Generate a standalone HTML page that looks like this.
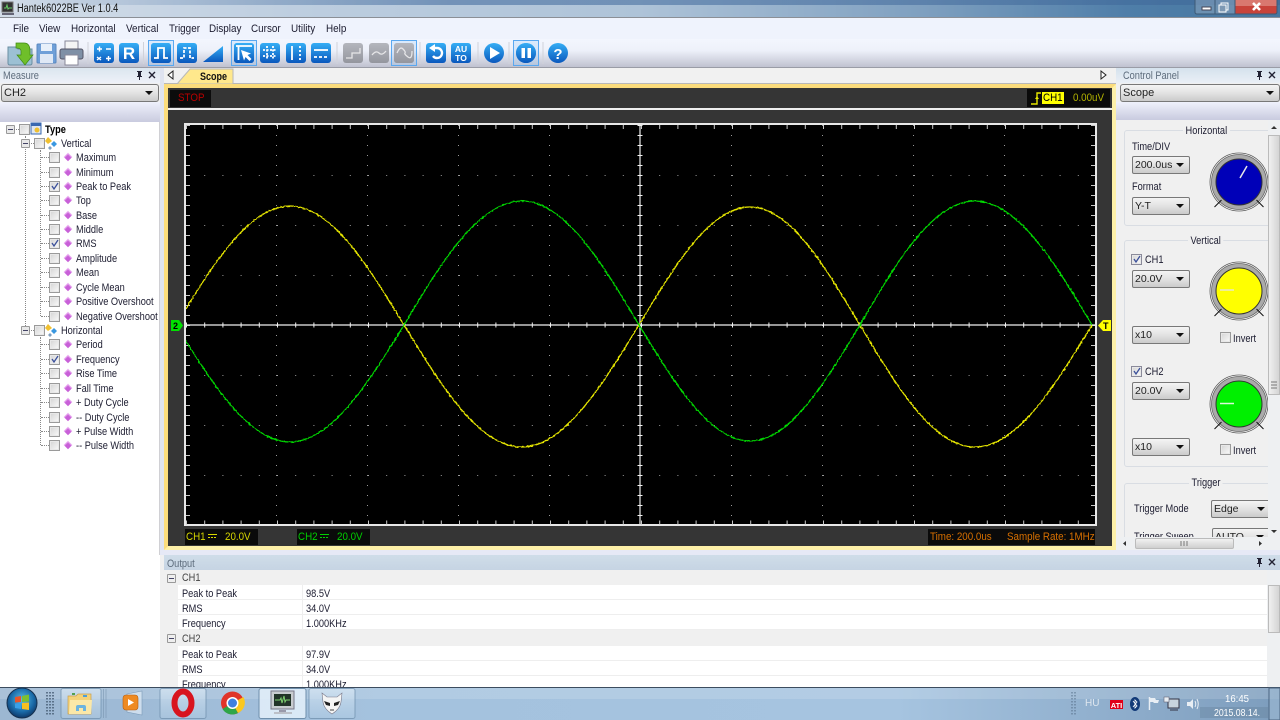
<!DOCTYPE html>
<html><head><meta charset="utf-8"><title>Hantek6022BE</title>
<style>
html,body{margin:0;padding:0;width:1280px;height:720px;overflow:hidden;background:#f0f0f0}
body{filter:blur(.35px)}
.a{position:absolute}
.t{position:absolute;white-space:nowrap;transform:scaleX(.84);transform-origin:0 50%;font:11px/12px "Liberation Sans",sans-serif;color:#1c1c30;margin-top:1px}
.m{transform:scaleX(.9)}
.g{color:#5d6c7c;font-size:11px;transform:scaleX(.84)}
.s{position:absolute;white-space:nowrap;transform:scaleX(.89);transform-origin:0 50%;font:11px/12px "Liberation Sans",sans-serif}
.cb{position:absolute;width:9px;height:9px;border:1px solid #9a9a9a;background:linear-gradient(135deg,#d4d4d4,#fafafa);box-shadow:inset 0 0 0 1px #e8e8e8}
.cb svg{position:absolute;left:0;top:0}
.d{position:absolute;width:6px;height:6px;background:#c860d8;transform:rotate(45deg);left:65px;box-shadow:inset 1px 1px 1px #eeb8f4}
.h{position:absolute;border-top:1px dotted #888;height:0}
.v{position:absolute;border-left:1px dotted #888;width:0}
.x{position:absolute;width:7px;height:7px;border:1px solid #999;background:#e8e8e8;border-radius:1px}
.x:after{content:"";position:absolute;left:1px;top:3px;width:5px;height:1px;background:#446}
.c{position:absolute;box-sizing:border-box;border:1px solid #787878;border-radius:2px;background:linear-gradient(#f4f4f4,#e2e2e2 50%,#cbcbcb);font:10.5px/16px "Liberation Sans",sans-serif;color:#222;padding-left:2px;overflow:hidden}
.c:after{content:"";position:absolute;right:5px;top:6px;border:4px solid transparent;border-top:4px solid #111;border-bottom:0}
.box{position:absolute;border:1px solid #d9dde3;border-radius:3px}
.lbl{position:absolute;background:#f0f0f0;padding:0 3px}
.row{position:absolute;left:178px;width:1089px;height:14px;background:#fff;border-bottom:1px solid #eee}
.row i{position:absolute;left:124px;top:0;width:1px;height:15px;background:#eee}
</style></head><body>

<!-- title bar -->
<div class="a" style="left:0;top:0;width:1280px;height:17px;background:linear-gradient(90deg,#d3dde9 0,#bccddf 25%,#aec3d8 50%,#7fa0c0 72%,#4f7ea9 88%,#47779f 100%)"></div>
<div class="a" style="left:0;top:0;width:1280px;height:5px;background:linear-gradient(90deg,rgba(80,120,170,0),rgba(70,110,160,.6) 35%,rgba(60,100,150,.5) 100%)"></div>
<div class="a" style="left:0;top:17px;width:1280px;height:1px;background:#8b8f96"></div>
<svg class="a" style="left:0;top:0" width="16" height="17"><rect x="2" y="2" width="11" height="10" fill="#333" stroke="#777"/><path d="M4 8h2l1-3 1 4 1-1h3" stroke="#6c6" fill="none"/><rect x="2" y="13" width="12" height="2" fill="#667"/></svg>
<div class="t" style="left:17px;top:2px;font-size:11.5px;color:#111;transform:scaleX(.8)">Hantek6022BE Ver 1.0.4</div>
<svg class="a" style="left:1194px;top:0" width="86" height="16">
<rect x="41" y="0" width="42" height="14" rx="2" fill="#c8433a"/><rect x="41" y="0" width="42" height="6" fill="#d9786f"/>
<rect x="1" y="0" width="40" height="14" fill="#8aa4bd" fill-opacity=".55"/>
<path d="M1 0v12q0 2 2 2h78q2 0 2-2V0M21 0v14M41 0v14" stroke="#3d5a76" fill="none"/>
<rect x="8" y="7" width="9" height="3" fill="#fff" stroke="#445"/>
<rect x="27" y="3" width="7" height="7" fill="none" stroke="#fff"/><rect x="25" y="5" width="7" height="7" fill="#7d98b3" stroke="#fff"/>
<path d="M59 3l7 7M66 3l-7 7" stroke="#fff" stroke-width="2.6"/>
</svg>

<!-- menu & toolbar -->
<div class="a" style="left:0;top:18px;width:1280px;height:21px;background:#eff3fd"></div>
<div class="a" style="left:0;top:39px;width:1280px;height:28px;background:linear-gradient(#f3f6fe 0,#eef1fa 40%,#c0c2d0 100%)"></div>
<div class="a" style="left:0;top:67px;width:1280px;height:1px;background:#9a9ca6"></div>
<div class="t m" style="left:13px;top:22px">File</div>
<div class="t m" style="left:39px;top:22px">View</div>
<div class="t m" style="left:71px;top:22px">Horizontal</div>
<div class="t m" style="left:126px;top:22px">Vertical</div>
<div class="t m" style="left:169px;top:22px">Trigger</div>
<div class="t m" style="left:209px;top:22px">Display</div>
<div class="t m" style="left:251px;top:22px">Cursor</div>
<div class="t m" style="left:291px;top:22px">Utility</div>
<div class="t m" style="left:326px;top:22px">Help</div>

<svg class="a" style="left:0;top:39px" width="600" height="28">
<defs>
<linearGradient id="b" x1="0" y1="0" x2="0" y2="1"><stop offset="0" stop-color="#35aef5"/><stop offset="1" stop-color="#0a58bd"/></linearGradient>
<linearGradient id="gr" x1="0" y1="0" x2="0" y2="1"><stop offset="0" stop-color="#b4b6bd"/><stop offset="1" stop-color="#94969e"/></linearGradient>
</defs>
<!-- open / save / print -->
<path d="M8 8h8l2 2h14v14q0 2-2 2H10q-2 0-2-2z" fill="#9cc0d4" stroke="#6a8ea2"/>
<path d="M16 4h8q6 0 6 8v4h3l-8 10-8-10h4v-4q0-3-5-3z" fill="#6fbf2a" stroke="#3f8a14" stroke-width=".7"/>
<rect x="37" y="5" width="19" height="19" rx="1" fill="#6f9fd8" stroke="#5a88c0"/><rect x="41" y="5" width="11" height="7" fill="#e8f0fa"/><rect x="40" y="15" width="13" height="9" fill="#dfe8f5"/>
<rect x="65" y="2" width="13" height="9" fill="#f5f5f5" stroke="#889"/><rect x="60" y="10" width="23" height="10" rx="2" fill="#7f90a6" stroke="#556"/><rect x="65" y="16" width="13" height="10" fill="#fff" stroke="#889"/>
<path d="M88 3v22M143.500 3v22M231 3v22M337 3v22M420 3v22M478 3v22M509 3v22M543 3v22" stroke="#d0d2da"/>
<!-- blue square buttons -->
<g fill="url(#b)">
<rect x="94" y="4" width="20" height="20" rx="3"/><rect x="119" y="4" width="20" height="20" rx="3"/>
<rect x="151" y="4" width="20" height="20" rx="3"/><rect x="177" y="4" width="20" height="20" rx="3"/>
<rect x="234" y="4" width="20" height="20" rx="3"/><rect x="260" y="4" width="20" height="20" rx="3"/><rect x="286" y="4" width="20" height="20" rx="3"/><rect x="311" y="4" width="20" height="20" rx="3"/>
<rect x="426" y="4" width="20" height="20" rx="3"/><rect x="451" y="4" width="20" height="20" rx="3"/>
<path d="M203 23l20-16v16z"/>
<circle cx="494" cy="14" r="10"/><circle cx="526" cy="14" r="10"/><circle cx="558" cy="14" r="10"/>
</g>
<g fill="url(#gr)"><rect x="343" y="4" width="20" height="20" rx="3"/><rect x="369" y="4" width="20" height="20" rx="3"/><rect x="394" y="4" width="20" height="20" rx="3"/></g>
<!-- highlight frames -->
<g fill="#7cc0f8" fill-opacity=".2" stroke="#5aa8f0"><rect x="148.500" y="1.500" width="25" height="25"/><rect x="231.500" y="1.500" width="25" height="25"/><rect x="391.500" y="1.500" width="25" height="25"/><rect x="513.500" y="1.500" width="25" height="25"/></g>
<g fill="url(#b)"><rect x="151" y="4" width="20" height="20" rx="3"/><rect x="234" y="4" width="20" height="20" rx="3"/><circle cx="526" cy="14" r="10"/></g>
<rect x="394" y="4" width="20" height="20" rx="3" fill="url(#gr)"/>
<!-- glyphs -->
<g fill="none" stroke="#fff" stroke-width="1.800">
<path d="M97 10h5M99.500 7.500v5M106 10h5M97 18l4 3M101 18l-4 3M106 19.500h5M108.500 17v5" stroke-width="1.400"/>
<path d="M154 19h4v-10h6v10h4"/>
<path d="M180 19h4v-10h6v10h4" stroke-dasharray="3 1.500"/>
<path d="M236 7h16M238.500 7v14"/>
<path d="M263 11h14M263 17h14M267 7v14M273 7v14" stroke-dasharray="2 1.500"/>
<path d="M292 7v14" /><path d="M300 7v14" stroke-dasharray="2 2"/>
<path d="M314 11h14"/><path d="M314 18h14" stroke-dasharray="3 2"/>
<path d="M346 19h6v-5h8v-5" stroke-width="1.300" stroke="#e6e6e8"/>
<path d="M372 16q4-5 7-2t7-2" stroke-width="1.300" stroke="#e6e6e8"/>
<path d="M397 14q3-7 6-4t2 4 3 4 4-6" stroke-width="1.300" stroke="#e6e6e8"/>
<path d="M431 9h6a5 5 0 1 1-4 8" stroke-width="2.400"/>
</g>
<path d="M435 5v8l-6-4z" fill="#fff"/>
<path d="M241 11l10 3.500-3.500 1.500 4 4-2 2-4-4-1.500 3.500z" fill="#fff"/>
<path d="M490 8l10 6-10 6z" fill="#fff"/>
<rect x="521.500" y="9" width="3.500" height="10" fill="#fff"/><rect x="527.500" y="9" width="3.500" height="10" fill="#fff"/>
<g font-family="Liberation Sans,sans-serif" font-weight="bold" fill="#fff" text-anchor="middle">
<text x="129" y="20" font-size="17">R</text>
<text x="461" y="13" font-size="8.500">AU</text><text x="461" y="22" font-size="8.500">TO</text>
<text x="558" y="20" font-size="15">?</text>
</g>
</svg>

<!-- left panel -->
<div class="a" style="left:0;top:68px;width:160px;height:15px;background:linear-gradient(#dbe6ef,#eef1f8)"></div>
<div class="t g" style="left:3px;top:69px">Measure</div>
<svg class="a" style="left:134px;top:70px" width="24" height="11"><path d="M3 1h5v1h-1v4h1v1H6v3H5V7H3V6h1V2H3z" fill="#223"/><path d="M15 2l6 6M21 2l-6 6" stroke="#223" stroke-width="1.400"/></svg>
<div class="c" style="left:1px;top:84px;width:158px;height:18px;border-radius:3px;font-size:11px">CH2</div>
<div class="a" style="left:0;top:102px;width:160px;height:20px;background:linear-gradient(#eff1fc,#c9cbdf)"></div>
<div class="a" style="left:0;top:122px;width:160px;height:565px;background:#fff;border-right:0"></div>
<div class="a" style="left:159px;top:122px;width:1px;height:433px;background:#d0d0d4"></div>

<!-- tree -->
<div class="v" style="left:25px;top:136px;height:194px"></div>
<div class="v" style="left:40px;top:150px;height:166px"></div>
<div class="v" style="left:40px;top:337px;height:108px"></div>
<div class="x" style="left:6px;top:125px"></div>
<div class="h" style="left:14px;top:129px;width:5px"></div>
<div class="cb" style="left:19px;top:124px"></div>
<svg class="a" style="left:30px;top:122px" width="12" height="14"><rect x="1" y="1" width="10" height="11" fill="#dfe6f0" stroke="#3a68b0"/><rect x="1" y="1" width="10" height="3" fill="#3a68b0"/><circle cx="7" cy="8" r="2.500" fill="#f0c030"/></svg>
<div class="t" style="left:45px;top:123px;font-weight:bold;color:#000">Type</div>
<div class="x" style="left:21px;top:139px"></div>
<div class="h" style="left:29px;top:143px;width:5px"></div>
<div class="cb" style="left:34px;top:138px"></div>
<svg class="a" style="left:44px;top:136px" width="15" height="15"><path d="M4 1l4 4-4 3-3-3z" fill="#f0c030"/><path d="M10 5l3 3-3 3-3-3z" fill="#3a98e0"/><path d="M6 10l2 2-2 2-2-2z" fill="#80a0c0"/></svg>
<div class="t" style="left:61px;top:137px">Vertical</div>
<div class="x" style="left:21px;top:326px"></div>
<div class="h" style="left:29px;top:330px;width:5px"></div>
<div class="cb" style="left:34px;top:325px"></div>
<svg class="a" style="left:44px;top:323px" width="15" height="15"><path d="M4 1l4 4-4 3-3-3z" fill="#f0c030"/><path d="M10 5l3 3-3 3-3-3z" fill="#3a98e0"/><path d="M6 10l2 2-2 2-2-2z" fill="#80a0c0"/></svg>
<div class="t" style="left:61px;top:324px">Horizontal</div>

<div class="h" style="left:41px;top:157px;width:8px"></div><div class="cb" style="left:49px;top:152px"></div><div class="d" style="top:154px"></div><div class="t" style="left:76px;top:151px">Maximum</div>
<div class="h" style="left:41px;top:172px;width:8px"></div><div class="cb" style="left:49px;top:167px"></div><div class="d" style="top:169px"></div><div class="t" style="left:76px;top:166px">Minimum</div>
<div class="h" style="left:41px;top:186px;width:8px"></div><div class="cb" style="left:49px;top:181px"><svg width="9" height="9"><path d="M2 4l2 3 4-6" stroke="#3a4f9a" stroke-width="1.300" fill="none"/></svg></div><div class="d" style="top:183px"></div><div class="t" style="left:76px;top:180px">Peak to Peak</div>
<div class="h" style="left:41px;top:200px;width:8px"></div><div class="cb" style="left:49px;top:195px"></div><div class="d" style="top:197px"></div><div class="t" style="left:76px;top:194px">Top</div>
<div class="h" style="left:41px;top:215px;width:8px"></div><div class="cb" style="left:49px;top:210px"></div><div class="d" style="top:212px"></div><div class="t" style="left:76px;top:209px">Base</div>
<div class="h" style="left:41px;top:229px;width:8px"></div><div class="cb" style="left:49px;top:224px"></div><div class="d" style="top:226px"></div><div class="t" style="left:76px;top:223px">Middle</div>
<div class="h" style="left:41px;top:243px;width:8px"></div><div class="cb" style="left:49px;top:238px"><svg width="9" height="9"><path d="M2 4l2 3 4-6" stroke="#3a4f9a" stroke-width="1.300" fill="none"/></svg></div><div class="d" style="top:240px"></div><div class="t" style="left:76px;top:237px">RMS</div>
<div class="h" style="left:41px;top:258px;width:8px"></div><div class="cb" style="left:49px;top:253px"></div><div class="d" style="top:255px"></div><div class="t" style="left:76px;top:252px">Amplitude</div>
<div class="h" style="left:41px;top:272px;width:8px"></div><div class="cb" style="left:49px;top:267px"></div><div class="d" style="top:269px"></div><div class="t" style="left:76px;top:266px">Mean</div>
<div class="h" style="left:41px;top:287px;width:8px"></div><div class="cb" style="left:49px;top:282px"></div><div class="d" style="top:284px"></div><div class="t" style="left:76px;top:281px">Cycle Mean</div>
<div class="h" style="left:41px;top:301px;width:8px"></div><div class="cb" style="left:49px;top:296px"></div><div class="d" style="top:298px"></div><div class="t" style="left:76px;top:295px">Positive Overshoot</div>
<div class="h" style="left:41px;top:316px;width:8px"></div><div class="cb" style="left:49px;top:311px"></div><div class="d" style="top:313px"></div><div class="t" style="left:76px;top:310px">Negative Overshoot</div>
<div class="h" style="left:41px;top:344px;width:8px"></div><div class="cb" style="left:49px;top:339px"></div><div class="d" style="top:341px"></div><div class="t" style="left:76px;top:338px">Period</div>
<div class="h" style="left:41px;top:359px;width:8px"></div><div class="cb" style="left:49px;top:354px"><svg width="9" height="9"><path d="M2 4l2 3 4-6" stroke="#3a4f9a" stroke-width="1.300" fill="none"/></svg></div><div class="d" style="top:356px"></div><div class="t" style="left:76px;top:353px">Frequency</div>
<div class="h" style="left:41px;top:373px;width:8px"></div><div class="cb" style="left:49px;top:368px"></div><div class="d" style="top:370px"></div><div class="t" style="left:76px;top:367px">Rise Time</div>
<div class="h" style="left:41px;top:388px;width:8px"></div><div class="cb" style="left:49px;top:383px"></div><div class="d" style="top:385px"></div><div class="t" style="left:76px;top:382px">Fall Time</div>
<div class="h" style="left:41px;top:402px;width:8px"></div><div class="cb" style="left:49px;top:397px"></div><div class="d" style="top:399px"></div><div class="t" style="left:76px;top:396px">+ Duty Cycle</div>
<div class="h" style="left:41px;top:417px;width:8px"></div><div class="cb" style="left:49px;top:412px"></div><div class="d" style="top:414px"></div><div class="t" style="left:76px;top:411px">-- Duty Cycle</div>
<div class="h" style="left:41px;top:431px;width:8px"></div><div class="cb" style="left:49px;top:426px"></div><div class="d" style="top:428px"></div><div class="t" style="left:76px;top:425px">+ Pulse Width</div>
<div class="h" style="left:41px;top:445px;width:8px"></div><div class="cb" style="left:49px;top:440px"></div><div class="d" style="top:442px"></div><div class="t" style="left:76px;top:439px">-- Pulse Width</div>

<!-- centre: tabs -->
<div class="a" style="left:160px;top:68px;width:4px;height:487px;background:#dfe3f0"></div>
<div class="a" style="left:164px;top:68px;width:952px;height:15px;background:#f1f1f1;border-bottom:1px solid #b8b8b8"></div>
<svg class="a" style="left:164px;top:68px" width="952" height="16">
<path d="M13 16L26 1h43v15z" fill="#ffe88c" stroke="#b8b8b8"/>
<path d="M9 3v8l-5-4zM937 3v8l5-4z" fill="#fff" stroke="#222"/>
</svg>
<div class="t" style="left:200px;top:70px;font-weight:bold;color:#111;transform:scaleX(.82)">Scope</div>

<!-- scope frame -->
<div class="a" style="left:164px;top:84px;width:952px;height:466px;box-sizing:border-box;border:4px solid #fbdc7c;border-bottom-color:#fdf0a8;border-right-color:#fdf0a8;background:#353535;box-shadow:0 1px 0 #fff"></div>
<div class="a" style="left:168px;top:108px;width:944px;height:2px;background:#eee"></div>
<div class="a" style="left:170px;top:90px;width:41px;height:17px;background:#0c0c0c"></div>
<div class="s" style="left:178px;top:92px;color:#b80000">STOP</div>
<div class="a" style="left:1027px;top:89px;width:83px;height:18px;background:#0a0a0a"></div>
<svg class="a" style="left:1030px;top:90px" width="12" height="16"><path d="M1 14h6V3h4" stroke="#e6e600" stroke-width="1.400" fill="none"/><path d="M5 9l2-3 2 3z" fill="#e6e600"/></svg>
<div class="a" style="left:1042px;top:92px;width:22px;height:12px;background:#ffff00"></div>
<div class="s" style="left:1043px;top:92px;color:#000">CH1</div>
<div class="s" style="left:1073px;top:92px;color:#b4b400">0.00uV</div>

<!-- plot -->
<svg class="a" style="left:184px;top:123px" width="914" height="404" viewBox="184 123 914 404">
<defs>
<clipPath id="cp"><rect x="186" y="125" width="909" height="399"/></clipPath>
<filter id="j" x="-2%" y="-2%" width="104%" height="104%"><feTurbulence type="fractalNoise" baseFrequency=".45" numOctaves="1" seed="4"/><feDisplacementMap in="SourceGraphic" scale="2.400" xChannelSelector="R" yChannelSelector="G"/></filter>
</defs>
<rect x="185" y="124" width="911" height="401" fill="#000" stroke="#e8e8e8" stroke-width="2"/>
<g stroke="#9a9a9a" stroke-width="1">
<path d="M276.500 125V524M367.500 125V524M458.500 125V524M549.500 125V524M731.500 125V524M822.500 125V524M913.500 125V524M1004.500 125V524" stroke-dasharray="1 9"/>
<path d="M186 175.500H1095M186 225.500H1095M186 275.500H1095M186 375.500H1095M186 425.500H1095M186 475.500H1095" stroke-dasharray="1 17.200"/>
</g>
<g stroke="#c8c8c8">
<path d="M186 127H1095M186 522.500H1095" stroke-width="4" stroke-dasharray="1 17.200"/>
<path d="M188 125V524M1093 125V524" stroke-width="4" stroke-dasharray="1 9"/>
</g>
<g stroke="#f0f0f0">
<path d="M186 325H1095" stroke-width="1.200"/>
<path d="M640 125V524" stroke-width="1.200"/>
<path d="M186 325H1095" stroke-width="5" stroke-dasharray="1 17.200"/>
<path d="M640 125V524" stroke-width="5" stroke-dasharray="1 9"/>
</g>
<g clip-path="url(#cp)" fill="none" stroke-width="1.300" filter="url(#j)">
<path stroke="#e8e800" d="M176,325C213,264 249,206 290,206C331,206 367,264 404,325C442,387 479,447 522,447C564,447 601,387 639,325C675,265 710,207 750,207C790,207 824,265 860,325C897,387 933,447 975,447C1017,447 1054,387 1092,325"/>
<path stroke="#00d800" d="M176,325C213,385 249,442 290,442C331,442 367,385 404,325C442,261 479,201 522,201C564,201 601,261 639,325C675,384 710,441 750,441C790,441 824,384 860,325C897,261 933,201 975,201C1017,201 1054,261 1092,325"/>
</g>
</svg>
<svg class="a" style="left:170px;top:319px" width="14" height="13"><path d="M1 1h8l4 5.500-4 5.500H1z" fill="#00e000"/><text x="3" y="10" font-size="9" font-weight="bold" font-family="Liberation Sans,sans-serif" fill="#000">2</text></svg>
<svg class="a" style="left:1097px;top:319px" width="15" height="13"><path d="M14 1H6L1 6.500 6 12h8z" fill="#ffff00"/><text x="6" y="10" font-size="9" font-weight="bold" font-family="Liberation Sans,sans-serif" fill="#000">T</text></svg>

<!-- scope bottom -->
<div class="a" style="left:185px;top:529px;width:73px;height:16px;background:#0a0a0a"></div>
<div class="a" style="left:297px;top:529px;width:73px;height:16px;background:#0a0a0a"></div>
<div class="a" style="left:928px;top:529px;width:167px;height:16px;background:#0a0a0a"></div>
<div class="s" style="left:186px;top:531px;color:#d8d800">CH1</div>
<svg class="a" style="left:208px;top:533px" width="10" height="6"><path d="M0 1.500h9" stroke="#d8d800"/><path d="M0 4.500h9" stroke="#d8d800" stroke-dasharray="2 1"/></svg>
<div class="s" style="left:225px;top:531px;color:#d8d800">20.0V</div>
<div class="s" style="left:298px;top:531px;color:#00d000">CH2</div>
<svg class="a" style="left:320px;top:533px" width="10" height="6"><path d="M0 1.500h9" stroke="#00d000"/><path d="M0 4.500h9" stroke="#00d000" stroke-dasharray="2 1"/></svg>
<div class="s" style="left:337px;top:531px;color:#00d000">20.0V</div>
<div class="s" style="left:930px;top:531px;color:#d87000">Time: 200.0us</div>
<div class="s" style="left:1007px;top:531px;color:#d87000">Sample Rate: 1MHz</div>

<!-- right panel -->
<div class="a" style="left:1116px;top:68px;width:164px;height:15px;background:linear-gradient(#d5e2ed,#eaeff6)"></div>
<div class="t g" style="left:1123px;top:69px">Control Panel</div>
<svg class="a" style="left:1254px;top:70px" width="24" height="11"><path d="M3 1h5v1h-1v4h1v1H6v3H5V7H3V6h1V2H3z" fill="#223"/><path d="M15 2l6 6M21 2l-6 6" stroke="#223" stroke-width="1.400"/></svg>
<div class="c" style="left:1120px;top:84px;width:160px;height:18px;border-radius:3px;font-size:11px">Scope</div>
<div class="a" style="left:1116px;top:102px;width:164px;height:18px;background:linear-gradient(#eff1fc,#c9cbdf)"></div>
<div class="a" style="left:1116px;top:120px;width:164px;height:417px;background:#f0f0f0;overflow:hidden"></div>

<div class="box" style="left:1124px;top:130px;width:150px;height:94px"></div>
<div class="t lbl" style="left:1183px;top:124px">Horizontal</div>
<div class="t" style="left:1132px;top:140px">Time/DIV</div>
<div class="c" style="left:1132px;top:156px;width:58px;height:18px">200.0us</div>
<div class="t" style="left:1132px;top:180px">Format</div>
<div class="c" style="left:1132px;top:197px;width:58px;height:18px">Y-T</div>

<div class="box" style="left:1124px;top:240px;width:150px;height:225px"></div>
<div class="t lbl" style="left:1188px;top:234px">Vertical</div>
<div class="cb" style="left:1131px;top:254px;border-color:#8a8a9a"><svg width="9" height="9"><path d="M2 4l2 3 4-6" stroke="#3a4f9a" stroke-width="1.300" fill="none"/></svg></div>
<div class="t" style="left:1145px;top:253px">CH1</div>
<div class="c" style="left:1132px;top:270px;width:58px;height:18px">20.0V</div>
<div class="c" style="left:1132px;top:326px;width:58px;height:18px">x10</div>
<div class="cb" style="left:1220px;top:332px"></div>
<div class="t" style="left:1233px;top:332px">Invert</div>
<div class="cb" style="left:1131px;top:366px;border-color:#8a8a9a"><svg width="9" height="9"><path d="M2 4l2 3 4-6" stroke="#3a4f9a" stroke-width="1.300" fill="none"/></svg></div>
<div class="t" style="left:1145px;top:365px">CH2</div>
<div class="c" style="left:1132px;top:382px;width:58px;height:18px">20.0V</div>
<div class="c" style="left:1132px;top:438px;width:58px;height:18px">x10</div>
<div class="cb" style="left:1220px;top:444px"></div>
<div class="t" style="left:1233px;top:444px">Invert</div>

<!-- knobs -->
<svg class="a" style="left:1200px;top:145px" width="68" height="75" viewBox="1200 145 68 75">
<circle cx="1239" cy="182" r="29" fill="#fff" stroke="#555" stroke-width=".8"/><circle cx="1239" cy="182" r="27.500" fill="#aaa" stroke="#666" stroke-width=".8"/>
<circle cx="1239" cy="182" r="23" fill="#0000b8" stroke="#333"/><path d="M1240 178l7-12" stroke="#e8e8e8" stroke-width="1.500"/>
<path d="M1221.500 200l-7 7M1256.500 200l7 7" stroke="#111"/></svg>
<svg class="a" style="left:1200px;top:254px" width="68" height="75" viewBox="1200 254 68 75">
<circle cx="1239" cy="291" r="29" fill="#fff" stroke="#555" stroke-width=".8"/><circle cx="1239" cy="291" r="27.500" fill="#aaa" stroke="#666" stroke-width=".8"/>
<circle cx="1239" cy="291" r="23" fill="#ffff00" stroke="#333"/><path d="M1220 290h14" stroke="#e8e8c8" stroke-width="1.500"/>
<path d="M1221.500 309l-7 7M1256.500 309l7 7" stroke="#111"/></svg>
<svg class="a" style="left:1200px;top:367px" width="68" height="75" viewBox="1200 367 68 75">
<circle cx="1239" cy="404" r="29" fill="#fff" stroke="#555" stroke-width=".8"/><circle cx="1239" cy="404" r="27.500" fill="#aaa" stroke="#666" stroke-width=".8"/>
<circle cx="1239" cy="404" r="23" fill="#00f000" stroke="#333"/><path d="M1220 403.500h14" stroke="#d8f8d8" stroke-width="1.500"/>
<path d="M1221.500 422l-7 7M1256.500 422l7 7" stroke="#111"/></svg>

<div class="box" style="left:1124px;top:483px;width:150px;height:80px;clip-path:inset(0 0 27px 0)"></div>
<div class="t lbl" style="left:1189px;top:476px">Trigger</div>
<div class="t" style="left:1134px;top:502px">Trigger Mode</div>
<div class="c" style="left:1211px;top:500px;width:60px;height:18px">Edge</div>
<div class="a" style="left:1116px;top:528px;width:152px;height:9px;overflow:hidden"><div class="t" style="left:18px;top:2px">Trigger Sweep</div><div class="c" style="left:96px;top:0;width:58px;height:18px">AUTO</div></div>

<!-- right scrollbars -->
<div class="a" style="left:1268px;top:120px;width:12px;height:417px;background:#eef0f2"></div>
<div class="a" style="left:1268px;top:135px;width:12px;height:260px;box-sizing:border-box;border:1px solid #bbb;background:linear-gradient(90deg,#f0f0f0,#d4d4d4)"></div>
<svg class="a" style="left:1268px;top:120px" width="12" height="420"><path d="M3 9l3-3 3 3zM3 410l3 3 3-3z" fill="#333"/><path d="M3 262h6M3 265h6M3 268h6" stroke="#777"/></svg>
<div class="a" style="left:1116px;top:537px;width:164px;height:13px;background:#eef0f2"></div>
<div class="a" style="left:1135px;top:538px;width:99px;height:11px;box-sizing:border-box;border:1px solid #bbb;border-radius:2px;background:linear-gradient(#f2f2f2,#cfcfcf)"></div>
<svg class="a" style="left:1116px;top:537px" width="164" height="13"><path d="M10 4v5l-3-2.500zM143 4v5l3-2.500z" fill="#333"/><path d="M65 4v5M68 4v5M71 4v5" stroke="#777"/></svg>

<!-- output panel -->
<div class="a" style="left:160px;top:550px;width:1120px;height:5px;background:#e6e9f6"></div>
<div class="a" style="left:164px;top:555px;width:1116px;height:15px;background:linear-gradient(#cfdde9,#c6d4e3)"></div>
<div class="t g" style="left:167px;top:557px">Output</div>
<svg class="a" style="left:1254px;top:557px" width="24" height="11"><path d="M3 1h5v1h-1v4h1v1H6v3H5V7H3V6h1V2H3z" fill="#223"/><path d="M15 2l6 6M21 2l-6 6" stroke="#223" stroke-width="1.400"/></svg>
<div class="a" style="left:160px;top:570px;width:1107px;height:117px;background:#f0f0f0"></div>
<div class="x" style="left:167px;top:574px;background:#eee"></div>
<div class="t" style="left:182px;top:571px;color:#444">CH1</div>
<div class="row" style="top:585px"><i></i></div>
<div class="row" style="top:600px"><i></i></div>
<div class="row" style="top:615px"><i></i></div>
<div class="t" style="left:182px;top:587px">Peak to Peak</div><div class="t" style="left:306px;top:587px">98.5V</div>
<div class="t" style="left:182px;top:602px">RMS</div><div class="t" style="left:306px;top:602px">34.0V</div>
<div class="t" style="left:182px;top:617px">Frequency</div><div class="t" style="left:306px;top:617px">1.000KHz</div>
<div class="x" style="left:167px;top:634px;background:#eee"></div>
<div class="t" style="left:182px;top:632px;color:#444">CH2</div>
<div class="row" style="top:646px"><i></i></div>
<div class="row" style="top:661px"><i></i></div>
<div class="row" style="top:676px;height:11px"><i></i></div>
<div class="t" style="left:182px;top:648px">Peak to Peak</div><div class="t" style="left:306px;top:648px">97.9V</div>
<div class="t" style="left:182px;top:663px">RMS</div><div class="t" style="left:306px;top:663px">34.0V</div>
<div class="t" style="left:182px;top:678px">Frequency</div><div class="t" style="left:306px;top:678px">1.000KHz</div>
<div class="a" style="left:1267px;top:570px;width:13px;height:117px;background:#eef0f2"></div>
<div class="a" style="left:1268px;top:585px;width:12px;height:48px;box-sizing:border-box;border:1px solid #bbb;background:linear-gradient(90deg,#f0f0f0,#d4d4d4)"></div>

<!-- taskbar -->
<svg class="a" style="left:0;top:687px" width="1280" height="33" viewBox="0 687 1280 33">
<defs>
<linearGradient id="tb" x1="0" y1="0" x2="1" y2="0"><stop offset="0" stop-color="#9cb7d2"/><stop offset=".3" stop-color="#a4c2de"/><stop offset=".7" stop-color="#a6c4e0"/><stop offset="1" stop-color="#7d9dbd"/></linearGradient>
<radialGradient id="orb" cx=".5" cy=".4" r=".65"><stop offset="0" stop-color="#5cc0e8"/><stop offset=".6" stop-color="#1a6aa8"/><stop offset="1" stop-color="#0c2c58"/></radialGradient>
<linearGradient id="bt" x1="0" y1="0" x2="0" y2="1"><stop offset="0" stop-color="#dbe9f5" stop-opacity=".7"/><stop offset="1" stop-color="#b4cfe6" stop-opacity=".4"/></linearGradient>
</defs>
<rect x="0" y="687" width="1280" height="33" fill="url(#tb)"/>
<rect x="0" y="687" width="1280" height="12" fill="#fff" fill-opacity=".15"/>
<rect x="0" y="687" width="1280" height="1" fill="#3c4c5e"/>
<!-- orb -->
<circle cx="22" cy="703" r="15" fill="url(#orb)" stroke="#16304e"/>
<path d="M15 697l6-1v6l-6 .5z" fill="#e8552a"/><path d="M22 696l7-1.500v7l-7 .5z" fill="#7cc030"/><path d="M15 703.500l6-.5v6l-6-1z" fill="#3aa0e8"/><path d="M22 703l7-.5v7.500l-7-1z" fill="#f8c020"/>
<path d="M47 692v24M50 692v24M53 692v24" stroke="#445a72" stroke-width="1.500" stroke-dasharray="1.500 1.500"/>
<!-- task buttons -->
<g fill="url(#bt)" stroke="#6f8fac" stroke-opacity=".75"><rect x="61" y="688.500" width="40" height="30" rx="2"/><rect x="160" y="688.500" width="46" height="30" rx="2"/><rect x="309" y="688.500" width="46" height="30" rx="2"/></g>
<rect x="259" y="688.500" width="47" height="30" rx="2" fill="#e4f0fa" fill-opacity=".85" stroke="#6f8fac"/>
<path d="M103.500 689v29M106 689v29" stroke="#6f8ca8" stroke-opacity=".5"/>
<!-- explorer -->
<path d="M68 696h8l2-2h13v20H68z" fill="#f3d27a" stroke="#c8a050" stroke-width=".7"/><path d="M70 700h22l-1 14H69z" fill="#fbe8a8"/><path d="M76 711v-4q0-2 2-2h6q2 0 2 2v4h-3v-3h-4v3z" fill="#6cb4e0"/>
<rect x="72" y="693" width="3" height="2" fill="#50a050"/><rect x="83" y="695" width="4" height="2" fill="#4c9ed8"/>
<!-- wmp -->
<path d="M127 694l15-3v24l-15-3z" fill="#d8e6f2" fill-opacity=".8" stroke="#7c9ab8" stroke-width=".6"/>
<rect x="123" y="695" width="15" height="15" rx="3" fill="#ee8a22" stroke="#b85f10" stroke-width=".6"/><path d="M128 699v7l6-3.500z" fill="#fff"/>
<!-- opera -->
<ellipse cx="183" cy="703" rx="8.500" ry="11.500" fill="none" stroke="#d8141e" stroke-width="6"/>
<!-- chrome -->
<circle cx="232.500" cy="703" r="11.500" fill="#e0342a"/>
<path d="M232.500 703L222.500 709A11.500 11.500 0 0 0 238 713z" fill="#2ea648"/>
<path d="M232.500 703L238 713A11.500 11.500 0 0 0 243.500 697z" fill="#fac820"/>
<circle cx="232.500" cy="703" r="6" fill="#fff"/><circle cx="232.500" cy="703" r="4.500" fill="#3f80e0"/>
<!-- scope app -->
<rect x="271" y="691" width="23" height="18" fill="#c8ccd0" stroke="#778"/><rect x="274" y="694" width="17" height="12" fill="#223428"/>
<path d="M275 700h5l1-2 1 5 2-7 1 6 1-2h4" stroke="#7ed070" fill="none"/>
<rect x="279" y="710" width="7" height="2" fill="#99a"/><rect x="274" y="712" width="18" height="2" fill="#bcc0c8"/>
<!-- alien -->
<path d="M322 693l5 4h10l5-4-1 9q-1 7-9 12-8-5-9-12z" fill="#f5f5f5" stroke="#778" stroke-width=".6"/>
<path d="M324 701l6 2 0 3-4-1zM340 701l-6 2 0 3 4-1z" fill="#222"/><path d="M330 710h4" stroke="#444"/>
<!-- tray -->
<g font-family="Liberation Sans,sans-serif">
<text x="1085" y="706" font-size="10" fill="#dfe7ef">HU</text>
<rect x="1110" y="700" width="13" height="9" fill="#e00018"/><text x="1116.500" y="708" font-size="7.500" font-weight="bold" text-anchor="middle" fill="#fff">ATI</text>
<ellipse cx="1135" cy="704" rx="5" ry="7" fill="#123a78"/><path d="M1133 701l4 5-2 2v-8l2 2-4 5" stroke="#fff" stroke-width=".8" fill="none"/>
<path d="M1149.500 697v13" stroke="#e8eef4" stroke-width="1.500"/><path d="M1150 698h5l1 2h3l-1 3h-4l-1-1h-3z" fill="#e8eef4"/>
<rect x="1168" y="699" width="11" height="9" fill="#c8d4de" stroke="#334"/><rect x="1164" y="697" width="5" height="5" fill="#e8eef4" stroke="#667" stroke-width=".6"/><path d="M1170 710h8" stroke="#334"/>
<path d="M1187 702h3l3-3v10l-3-3h-3z" fill="#e8eef4"/><path d="M1195 701q1.500 3 0 6M1197 699q2.500 5 0 10" stroke="#e8eef4" fill="none"/>
<rect x="1200" y="707" width="68" height="11" fill="#5c7890" fill-opacity=".3"/>
<text x="1225" y="702" font-size="10.500" fill="#fff" textLength="24" lengthAdjust="spacingAndGlyphs">16:45</text>
<text x="1214" y="716" font-size="10.500" fill="#fff" textLength="46" lengthAdjust="spacingAndGlyphs">2015.08.14.</text>
</g>
<path d="M1072 692v24M1075 692v24" stroke="#556f88" stroke-dasharray="1.500 1.500"/>
<rect x="1269" y="688" width="11" height="32" fill="#9fbad4" fill-opacity=".6" stroke="#4a6480"/>
</svg>
</body></html>
